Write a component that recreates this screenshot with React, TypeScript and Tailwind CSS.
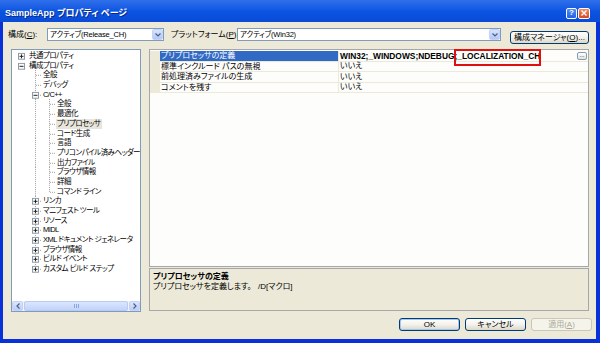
import React from 'react';

type Kind = 'none' | 'pipe' | 'tee' | 'ell';

interface TreeRow {
  label: string;
  cols: Kind[];
  exp?: '+' | '-';
  selected?: boolean;
}

const LINE = '#a0a0a0';

// ツリーの行データ
const treeRows: TreeRow[] = [
  { label: '共通プロパティ', cols: ['none'], exp: '+' },
  { label: '構成プロパティ', cols: ['none'], exp: '-' },
  { label: '全般', cols: ['none', 'tee'] },
  { label: 'デバッグ', cols: ['none', 'tee'] },
  { label: 'C/C++', cols: ['none', 'tee'], exp: '-' },
  { label: '全般', cols: ['none', 'pipe', 'tee'] },
  { label: '最適化', cols: ['none', 'pipe', 'tee'] },
  { label: 'プリプロセッサ', cols: ['none', 'pipe', 'tee'], selected: true },
  { label: 'コード生成', cols: ['none', 'pipe', 'tee'] },
  { label: '言語', cols: ['none', 'pipe', 'tee'] },
  { label: 'プリコンパイル済みヘッダー', cols: ['none', 'pipe', 'tee'] },
  { label: '出力ファイル', cols: ['none', 'pipe', 'tee'] },
  { label: 'ブラウザ情報', cols: ['none', 'pipe', 'tee'] },
  { label: '詳細', cols: ['none', 'pipe', 'tee'] },
  { label: 'コマンド ライン', cols: ['none', 'pipe', 'ell'] },
  { label: 'リンカ', cols: ['none', 'tee'], exp: '+' },
  { label: 'マニフェスト ツール', cols: ['none', 'tee'], exp: '+' },
  { label: 'リソース', cols: ['none', 'tee'], exp: '+' },
  { label: 'MIDL', cols: ['none', 'tee'], exp: '+' },
  { label: 'XML ドキュメント ジェネレータ', cols: ['none', 'tee'], exp: '+' },
  { label: 'ブラウザ情報', cols: ['none', 'tee'], exp: '+' },
  { label: 'ビルド イベント', cols: ['none', 'tee'], exp: '+' },
  { label: 'カスタム ビルド ステップ', cols: ['none', 'ell'], exp: '+' },
];

const props = [
  { name: 'プリプロセッサの定義', value: 'WIN32;_WINDOWS;NDEBUG;', mark: '_LOCALIZATION_CH', selected: true },
  { name: '標準インクルード パスの無視', value: 'いいえ' },
  { name: '前処理済みファイルの生成', value: 'いいえ' },
  { name: 'コメントを残す', value: 'いいえ' },
];

const Guide: React.FC<{ kind: Kind; exp?: '+' | '-' }> = ({ kind, exp }) => (
  <svg width="14" height="100%" viewBox="0 0 14 10" preserveAspectRatio="none" className="shrink-0 h-full" shapeRendering="crispEdges">
    {(kind === 'pipe' || kind === 'tee') && (
      <line x1="7.5" y1="0" x2="7.5" y2="10" stroke={LINE} strokeDasharray="1 1" />
    )}
    {kind === 'ell' && <line x1="7.5" y1="0" x2="7.5" y2="5" stroke={LINE} strokeDasharray="1 1" />}
    {(kind === 'tee' || kind === 'ell') && (
      <line x1="8" y1="5.5" x2="14" y2="5.5" stroke={LINE} strokeDasharray="1 1" />
    )}
    {exp && (
      <g>
        <rect x="4.5" y="2.5" width="6" height="6" fill="#fbfbf8" stroke="#8e9aa8" />
        <line x1="5.5" y1="5.5" x2="9.5" y2="5.5" stroke="#222" />
        {exp === '+' && <line x1="7.5" y1="3.5" x2="7.5" y2="7.5" stroke="#222" />}
      </g>
    )}
  </svg>
);

const Combo: React.FC<{ text: string; width: string }> = ({ text, width }) => (
  <div className={`${width} h-[13px] border border-[#7f9db9] bg-white flex items-center`}>
    <span className="flex-1 pl-[2px] text-[7.5px] leading-[11px] tracking-[-0.2px] whitespace-nowrap overflow-hidden">{text}</span>
    <div className="w-[11px] h-[11px] rounded-[2px] bg-gradient-to-b from-[#d8e3fd] to-[#b4c8f6] border border-[#c3d3fb] flex items-center justify-center">
      <svg width="6" height="4" viewBox="0 0 6 4">
        <path d="M0.5 0.5 L3 3 L5.5 0.5" fill="none" stroke="#4d6185" strokeWidth="1.2" />
      </svg>
    </div>
  </div>
);

const XpButton: React.FC<{ children: React.ReactNode; kind?: 'default' | 'normal' | 'disabled'; width?: string }> = ({
  children,
  kind = 'normal',
  width = 'w-[61px]',
}) => {
  const base = `${width} h-[13px] rounded-[3px] border text-[8px] leading-[11px] flex items-center justify-center whitespace-nowrap`;
  if (kind === 'disabled') {
    return <button className={`${base} border-[#c9c7ba] bg-[#f5f4ea] text-[#aca899]`}>{children}</button>;
  }
  return (
    <button
      className={`${base} border-[#003c74] bg-gradient-to-b from-white via-[#f3f2ec] to-[#dcd7c8] ${
        kind === 'default' ? 'shadow-[inset_0_0_0_1px_#a8c4f0]' : ''
      }`}
    >
      {children}
    </button>
  );
};

export default function App() {
  return (
    <div className="w-[600px] h-[343px] overflow-hidden bg-[#0831d9] flex flex-col font-['Liberation_Sans','Noto_Sans_CJK_JP',sans-serif] [font-feature-settings:'palt'] text-black">
      {/* タイトルバー */}
      <div className="h-[22px] shrink-0 flex items-center pt-[4px] pl-[5px] pr-[10px] bg-gradient-to-b from-[#2f6fea] via-[#0b55e2] to-[#0a4ad6]">
        <span className="flex-1 text-white font-bold text-[9px] leading-[12px] [text-shadow:1px_1px_0_#0a2a8a] whitespace-nowrap">
          SampleApp プロパティ ページ
        </span>
        <div className="flex gap-[1px]">
          <div className="w-[11px] h-[11px] rounded-[2px] border border-white bg-gradient-to-b from-[#4f8cf5] to-[#2260e0] flex items-center justify-center text-white font-bold text-[8px] leading-none">
            ?
          </div>
          <div className="w-[12px] h-[11px] rounded-[2px] border border-white bg-gradient-to-b from-[#ef8a68] to-[#d6461c] flex items-center justify-center">
            <svg width="6" height="6" viewBox="0 0 6 6">
              <path d="M0.5 0.5 L5.5 5.5 M5.5 0.5 L0.5 5.5" stroke="white" strokeWidth="1.4" />
            </svg>
          </div>
        </div>
      </div>

      {/* 本体 */}
      <div className="flex-1 ml-[3px] mr-[4px] mb-[4px] bg-[#ece9d8] flex flex-col">
        {/* 構成・プラットフォーム行 */}
        <div className="mt-[6px] h-[20px] flex items-start pl-[5px]">
          <span className="w-[39px] h-[13px] text-[8px] leading-[13px] whitespace-nowrap">
            構成(<u>C</u>):
          </span>
          <Combo text="アクティブ(Release_CH)" width="w-[117px]" />
          <span className="ml-[7px] w-[66px] h-[13px] text-[8px] leading-[13px] whitespace-nowrap">
            プラットフォーム(<u>P</u>):
          </span>
          <Combo text="アクティブ(Win32)" width="w-[264px]" />
          <div className="ml-[9px] mt-[3px]">
            <XpButton width="w-[79px]">
              構成マネージャ(<u>O</u>)...
            </XpButton>
          </div>
        </div>

        {/* メイン */}
        <div className="mt-[1px] h-[263px] flex pl-[8px]">
          {/* ツリー */}
          <div className="w-[130px] h-full border border-[#7f9db9] bg-white flex flex-col">
            <div className="flex-1 pt-[1px] overflow-hidden">
              {treeRows.map((row, i) => (
                <div key={i} className="h-[9.7px] flex pl-[2px]">
                  {row.cols.map((c, j) => (
                    <Guide key={j} kind={c} exp={j === row.cols.length - 1 ? row.exp : undefined} />
                  ))}
                  <span
                    className={`px-[1px] text-[7.5px] leading-[9.7px] tracking-[-0.55px] whitespace-nowrap ${
                      row.selected ? 'bg-[#e8e6dc]' : ''
                    }`}
                  >
                    {row.label}
                  </span>
                </div>
              ))}
            </div>
            {/* 横スクロールバー */}
            <div className="h-[10px] flex bg-[#f4f3ee]">
              <div className="w-[11px] h-full rounded-[2px] border border-[#c3d3fb] bg-gradient-to-b from-[#dbe5fd] to-[#bccdf8] flex items-center justify-center">
                <svg width="4" height="6" viewBox="0 0 4 6">
                  <path d="M3.5 0.5 L1 3 L3.5 5.5" fill="none" stroke="#4d6185" strokeWidth="1.2" />
                </svg>
              </div>
              <div className="flex-1 mx-[1px] h-full rounded-[2px] border border-[#b8cbf5] bg-gradient-to-b from-[#dce6fd] to-[#c2d3fa] flex items-center justify-center gap-[1px]">
                <div className="w-[1px] h-[4px] bg-[#8ea6e0]" />
                <div className="w-[1px] h-[4px] bg-[#8ea6e0]" />
                <div className="w-[1px] h-[4px] bg-[#8ea6e0]" />
              </div>
              <div className="w-[11px] h-full rounded-[2px] border border-[#c3d3fb] bg-gradient-to-b from-[#dbe5fd] to-[#bccdf8] flex items-center justify-center">
                <svg width="4" height="6" viewBox="0 0 4 6">
                  <path d="M0.5 0.5 L3 3 L0.5 5.5" fill="none" stroke="#4d6185" strokeWidth="1.2" />
                </svg>
              </div>
            </div>
          </div>

          {/* プロパティグリッド + 説明 */}
          <div className="ml-[8px] w-[440px] h-full flex flex-col">
            <div className="h-[218px] border border-[#a7a6aa] bg-[#fdfdfb] pt-[1px]">
              {props.map((p, i) => (
                <div key={i} className="h-[10.5px] flex border-b border-[#ece9d8]">
                  <div className="w-[10px] bg-[#ece9d8]" />
                  <div
                    className={`w-[179px] pl-[1px] text-[8px] leading-[10px] whitespace-nowrap border-r border-[#ece9d8] ${
                      p.selected ? 'bg-[#316ac5] text-white' : ''
                    }`}
                  >
                    {p.name}
                  </div>
                  <div className="flex-1 flex items-center pl-[1px] pr-[1px]">
                    {p.mark ? (
                      <>
                        <span className="font-bold text-[8.4px] leading-[10px] whitespace-nowrap">
                          {p.value}
                          <span className="relative">
                            {p.mark}
                            <span className="absolute -left-[3px] -right-[1px] -top-[2px] -bottom-[5px] border-2 border-[#e01010]" />
                          </span>
                        </span>
                        <span className="flex-1" />
                        <span className="w-[10px] h-[8px] rounded-[2px] border border-[#7f9db9] bg-gradient-to-b from-white to-[#e4e1d5] text-[6px] leading-[4px] text-center">
                          ...
                        </span>
                      </>
                    ) : (
                      <span className="text-[8px] leading-[10px] whitespace-nowrap">{p.value}</span>
                    )}
                  </div>
                </div>
              ))}
            </div>
            <div className="mt-[1px] h-[43px] border border-[#a7a6aa] bg-[#ece9d8] px-[3px] pt-[3px]">
              <div className="font-bold text-[8px] leading-[10px] whitespace-nowrap">プリプロセッサの定義</div>
              <div className="text-[8px] leading-[10px] whitespace-nowrap">
                <span className="inline-block w-[105px]">プリプロセッサを定義します。</span>
                <span>/D[マクロ]</span>
              </div>
            </div>
          </div>
        </div>

        {/* ボタン */}
        <div className="mt-[6px] flex justify-end gap-[5px] pr-[4px]">
          <XpButton kind="default">OK</XpButton>
          <XpButton>キャンセル</XpButton>
          <XpButton kind="disabled">
            適用(<u>A</u>)
          </XpButton>
        </div>
      </div>
    </div>
  );
}
